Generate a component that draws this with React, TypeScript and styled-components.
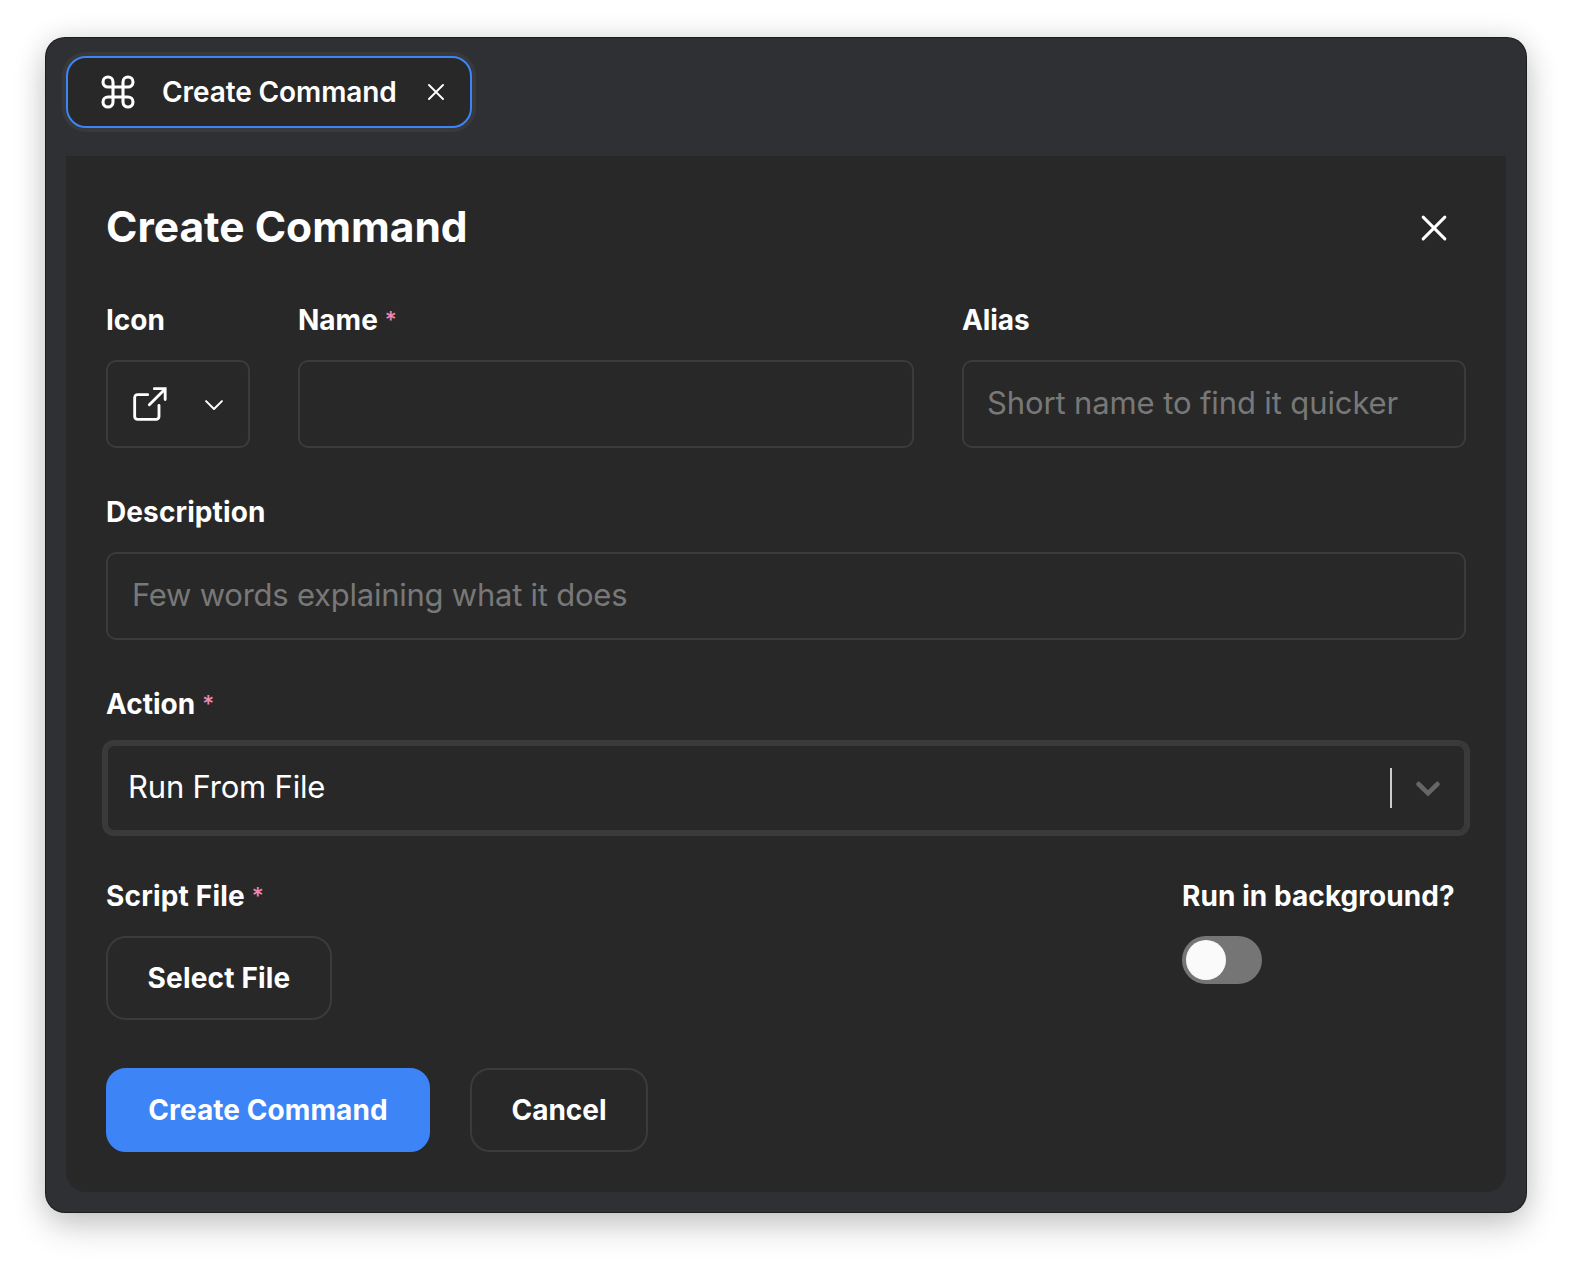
import React from "react";
import styled, { createGlobalStyle } from "styled-components";

const GlobalStyle = createGlobalStyle`
  * { box-sizing: border-box; }
  body { margin: 0; background: #fff; }
  button, input { font-family: inherit; color: inherit; }
`;

const Desktop = styled.div`
  width: 1572px;
  height: 1266px;
  padding: 38px 46px 54px;
  overflow: hidden;
  background: #fff;
  color: #fff;
  font-family: Inter, "Liberation Sans", sans-serif;
`;

const Window = styled.main`
  height: 1174px;
  padding: 18px 20px 20px;
  display: flex;
  flex-direction: column;
  gap: 28px;
  background: #2f3034;
  border-radius: 19px;
  box-shadow: 0 0 0 1px #1c1d1f, 0 14px 34px rgba(0, 0, 0, 0.2), 0 0 30px rgba(0, 0, 0, 0.1);
`;

const Tab = styled.div`
  width: 406px;
  height: 72px;
  flex: none;
  padding: 0 26px 0 30px;
  display: flex;
  align-items: center;
  border: 2px solid #3d84f7;
  border-radius: 20px;
  background: #282828;
  box-shadow: 0 0 0 4px #38393b;
`;

const TabTitle = styled.span`
  flex: 1;
  margin-left: 24px;
  padding-bottom: 1px;
  font-size: 28px;
  line-height: 34px;
  font-weight: 600;
  letter-spacing: -0.1px;
  white-space: nowrap;
`;

const IconButton = styled.button`
  display: flex;
  padding: 0;
  border: 0;
  background: none;
`;

const Panel = styled.section`
  flex: 1;
  padding: 40px;
  display: flex;
  flex-direction: column;
  background: #282828;
  border-radius: 0 0 20px 20px;
`;

const Header = styled.header`
  height: 64px;
  padding-right: 12px;
  display: flex;
  align-items: center;
  justify-content: space-between;
`;

const Title = styled.h1`
  margin: 0;
  padding-bottom: 2px;
  font-size: 42.5px;
  line-height: 62px;
  font-weight: 700;
`;

const Form = styled.form`
  margin-top: 44px;
  display: flex;
  flex-direction: column;
  gap: 48px;
`;

const Row = styled.div`
  display: flex;
  gap: 48px;
`;

const Field = styled.div<{ $width?: number }>`
  width: ${(p) => (p.$width ? `${p.$width}px` : "100%")};
  display: flex;
  flex-direction: column;
  align-items: flex-start;
  gap: 22px;
`;

const Label = styled.label<{ $tracking?: number }>`
  height: 34px;
  display: flex;
  gap: 7px;
  font-size: 28px;
  line-height: 32px;
  font-weight: 700;
  letter-spacing: ${(p) => p.$tracking ?? 0}px;
  white-space: nowrap;
`;

const Required = styled.span`
  color: #ed8ab5;
  font-size: 23px;
  line-height: 32px;
  font-weight: 500;
`;

const Input = styled.input<{ $tracking?: number }>`
  width: 100%;
  height: 88px;
  padding: 0 24px 4px;
  border: 2px solid #3b3b3b;
  border-radius: 10px;
  background: transparent;
  font-size: 31px;
  letter-spacing: ${(p) => p.$tracking ?? 0}px;
  outline: none;
  &::placeholder { color: #787878; opacity: 1; }
`;

const AliasInput = styled(Input)`
  padding-left: 23px;
`;

const IconPicker = styled.button`
  width: 144px;
  height: 88px;
  padding: 0 24px 0 22px;
  display: flex;
  align-items: center;
  justify-content: space-between;
  border: 2px solid #3b3b3b;
  border-radius: 10px;
  background: transparent;
`;

const Select = styled.div`
  width: 100%;
  height: 88px;
  padding: 0 20px;
  display: flex;
  align-items: center;
  border: 2px solid #3a3a3c;
  border-radius: 8px;
  box-shadow: 0 0 0 4px #3a3a3c;
`;

const SelectValue = styled.span`
  flex: 1;
  padding-bottom: 2px;
  font-size: 31px;
  line-height: 40px;
  letter-spacing: -0.2px;
`;

const Divider = styled.span`
  width: 2px;
  height: 40px;
  margin-right: 20px;
  background: #ccc;
`;

const ScriptRow = styled(Row)`
  justify-content: space-between;
`;

const Button = styled.button<{ $primary?: boolean; $width: number; $tracking?: number }>`
  width: ${(p) => p.$width}px;
  height: 84px;
  padding: 0;
  border: 2px solid ${(p) => (p.$primary ? "#3d84f7" : "#3b3b3b")};
  border-radius: 20px;
  background: ${(p) => (p.$primary ? "#3d84f7" : "transparent")};
  font-size: 28px;
  line-height: 34px;
  font-weight: 700;
  letter-spacing: ${(p) => p.$tracking ?? 0}px;
  white-space: nowrap;
`;

const Toggle = styled.button`
  width: 80px;
  height: 48px;
  padding: 4px;
  display: flex;
  border: 0;
  border-radius: 24px;
  background: #757575;
`;

const Knob = styled.span`
  width: 40px;
  height: 40px;
  border-radius: 50%;
  background: #fafafa;
`;

const Actions = styled.div`
  display: flex;
  gap: 40px;
`;

type GlyphProps = { size: number; stroke: number; color?: string; children: React.ReactNode };

const Glyph = ({ size, stroke, color = "#fff", children }: GlyphProps) => (
  <svg width={size} height={size} viewBox="0 0 24 24" fill="none" stroke={color}
    strokeWidth={stroke} strokeLinecap="round" strokeLinejoin="round">
    {children}
  </svg>
);

export default function App() {
  return (
    <>
      <GlobalStyle />
      <Desktop>
        <Window>
          <Tab>
            <Glyph size={40} stroke={1.85}>
              <path d="M18 3a3 3 0 0 0-3 3v12a3 3 0 1 0 3-3H6a3 3 0 1 0 3 3V6a3 3 0 1 0-3 3h12a3 3 0 0 0 0-6z" />
            </Glyph>
            <TabTitle>Create Command</TabTitle>
            <IconButton aria-label="Close tab">
              <Glyph size={16} stroke={2.8}><path d="M1.500 1.500l21 21M22.500 1.500l-21 21" /></Glyph>
            </IconButton>
          </Tab>
          <Panel>
            <Header>
              <Title>Create Command</Title>
              <IconButton aria-label="Close">
                <Glyph size={40} stroke={1.8}><path d="M5.500 5.500l13 13M18.500 5.500l-13 13" /></Glyph>
              </IconButton>
            </Header>
            <Form onSubmit={(e) => e.preventDefault()}>
              <Row>
                <Field $width={144}>
                  <Label>Icon</Label>
                  <IconPicker type="button" aria-label="Choose icon">
                    <Glyph size={40} stroke={1.7}>
                      <path d="M10.600 6.400H4.500a1.700 1.700 0 0 0-1.700 1.700v11.400a1.700 1.700 0 0 0 1.700 1.700h11.200a1.700 1.700 0 0 0 1.700-1.700v-6.700" />
                      <path d="M14.600 2.800h6.500v6.500M11.600 12.400l9.300-9.300" strokeLinejoin="miter" />
                    </Glyph>
                    <Glyph size={20} stroke={2.4}><path d="M2.500 8.500L12 18l9.500-9.500" /></Glyph>
                  </IconPicker>
                </Field>
                <Field $width={616}>
                  <Label>Name <Required>*</Required></Label>
                  <Input aria-label="Name" />
                </Field>
                <Field $width={504}>
                  <Label $tracking={-0.1}>Alias</Label>
                  <AliasInput $tracking={-0.12} placeholder="Short name to find it quicker" />
                </Field>
              </Row>
              <Field>
                <Label $tracking={0.1}>Description</Label>
                <Input $tracking={-0.24} placeholder="Few words explaining what it does" />
              </Field>
              <Field>
                <Label>Action <Required>*</Required></Label>
                <Select>
                  <SelectValue>Run From File</SelectValue>
                  <Divider />
                  <svg width="32" height="32" viewBox="0 0 32 32" fill="none" stroke="#666" strokeWidth="4.600" strokeLinecap="round">
                    <path d="M6.500 12L16 21.300 25.500 12" />
                  </svg>
                </Select>
              </Field>
              <ScriptRow>
                <Field $width={226}>
                  <Label $tracking={0.18}>Script File <Required>*</Required></Label>
                  <Button type="button" $width={226} $tracking={0.18}>Select File</Button>
                </Field>
                <Field $width={284}>
                  <Label $tracking={0.07}>Run in background?</Label>
                  <Toggle type="button" role="switch" aria-checked={false}><Knob /></Toggle>
                </Field>
              </ScriptRow>
              <Actions>
                <Button $primary $width={324} $tracking={0.08}>Create Command</Button>
                <Button type="button" $width={178}>Cancel</Button>
              </Actions>
            </Form>
          </Panel>
        </Window>
      </Desktop>
    </>
  );
}
